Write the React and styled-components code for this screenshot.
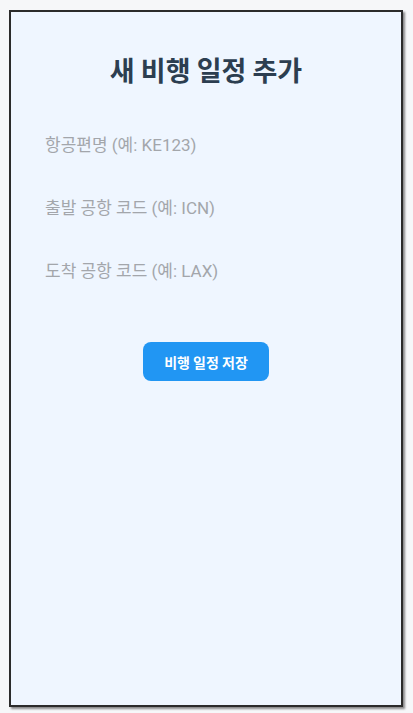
import React, { useState } from "react";
import styled, { createGlobalStyle } from "styled-components";

const GlobalStyle = createGlobalStyle`
  html, body {
    margin: 0;
    padding: 0;
    background: #f6f7f9;
    font-family: Roboto, "Noto Sans CJK KR", sans-serif;
  }
`;

const Page = styled.div`
  padding: 10px 10px 6px 9px;
  box-sizing: border-box;
  height: 713px;
`;

const Frame = styled.div`
  box-sizing: border-box;
  width: 394px;
  height: 697px;
  border: 2px solid #2b2b2b;
  background: #eff6ff;
  box-shadow: 2px 2px 2px rgba(0, 0, 0, 0.45);
  display: flex;
  flex-direction: column;
  padding: 42px 34px 0 34px;
`;

const Title = styled.h1`
  margin: 0 0 39px 0;
  height: 32px;
  line-height: 32px;
  text-align: center;
  font-size: 27px;
  font-weight: 700;
  color: #2c3e50;
  font-family: "Noto Sans CJK KR", Roboto, sans-serif;
`;

const Fields = styled.div`
  display: flex;
  flex-direction: column;
  gap: 23px;
`;

const Input = styled.input`
  height: 40px;
  border: none;
  outline: none;
  background: transparent;
  padding: 0;
  font-size: 17px;
  color: #333;
  font-family: Roboto, "Noto Sans CJK KR", sans-serif;
  &::placeholder {
    color: #a3a6ab;
  }
`;

const SaveButton = styled.button`
  align-self: center;
  margin-top: 51px;
  width: 126px;
  height: 39px;
  border: none;
  border-radius: 8px;
  background: #2196f3;
  color: #fff;
  font-size: 14px;
  font-weight: 700;
  font-family: "Noto Sans CJK KR", Roboto, sans-serif;
  cursor: pointer;
`;

function App() {
  const [flight, setFlight] = useState("");
  const [from, setFrom] = useState("");
  const [to, setTo] = useState("");

  return (
    <Page>
      <GlobalStyle />
      <Frame>
        <Title>새 비행 일정 추가</Title>
        <Fields>
          <Input
            placeholder="항공편명 (예: KE123)"
            value={flight}
            onChange={(e) => setFlight(e.target.value)}
          />
          <Input
            placeholder="출발 공항 코드 (예: ICN)"
            value={from}
            onChange={(e) => setFrom(e.target.value)}
          />
          <Input
            placeholder="도착 공항 코드 (예: LAX)"
            value={to}
            onChange={(e) => setTo(e.target.value)}
          />
        </Fields>
        <SaveButton>비행 일정 저장</SaveButton>
      </Frame>
    </Page>
  );
}

export default App;
